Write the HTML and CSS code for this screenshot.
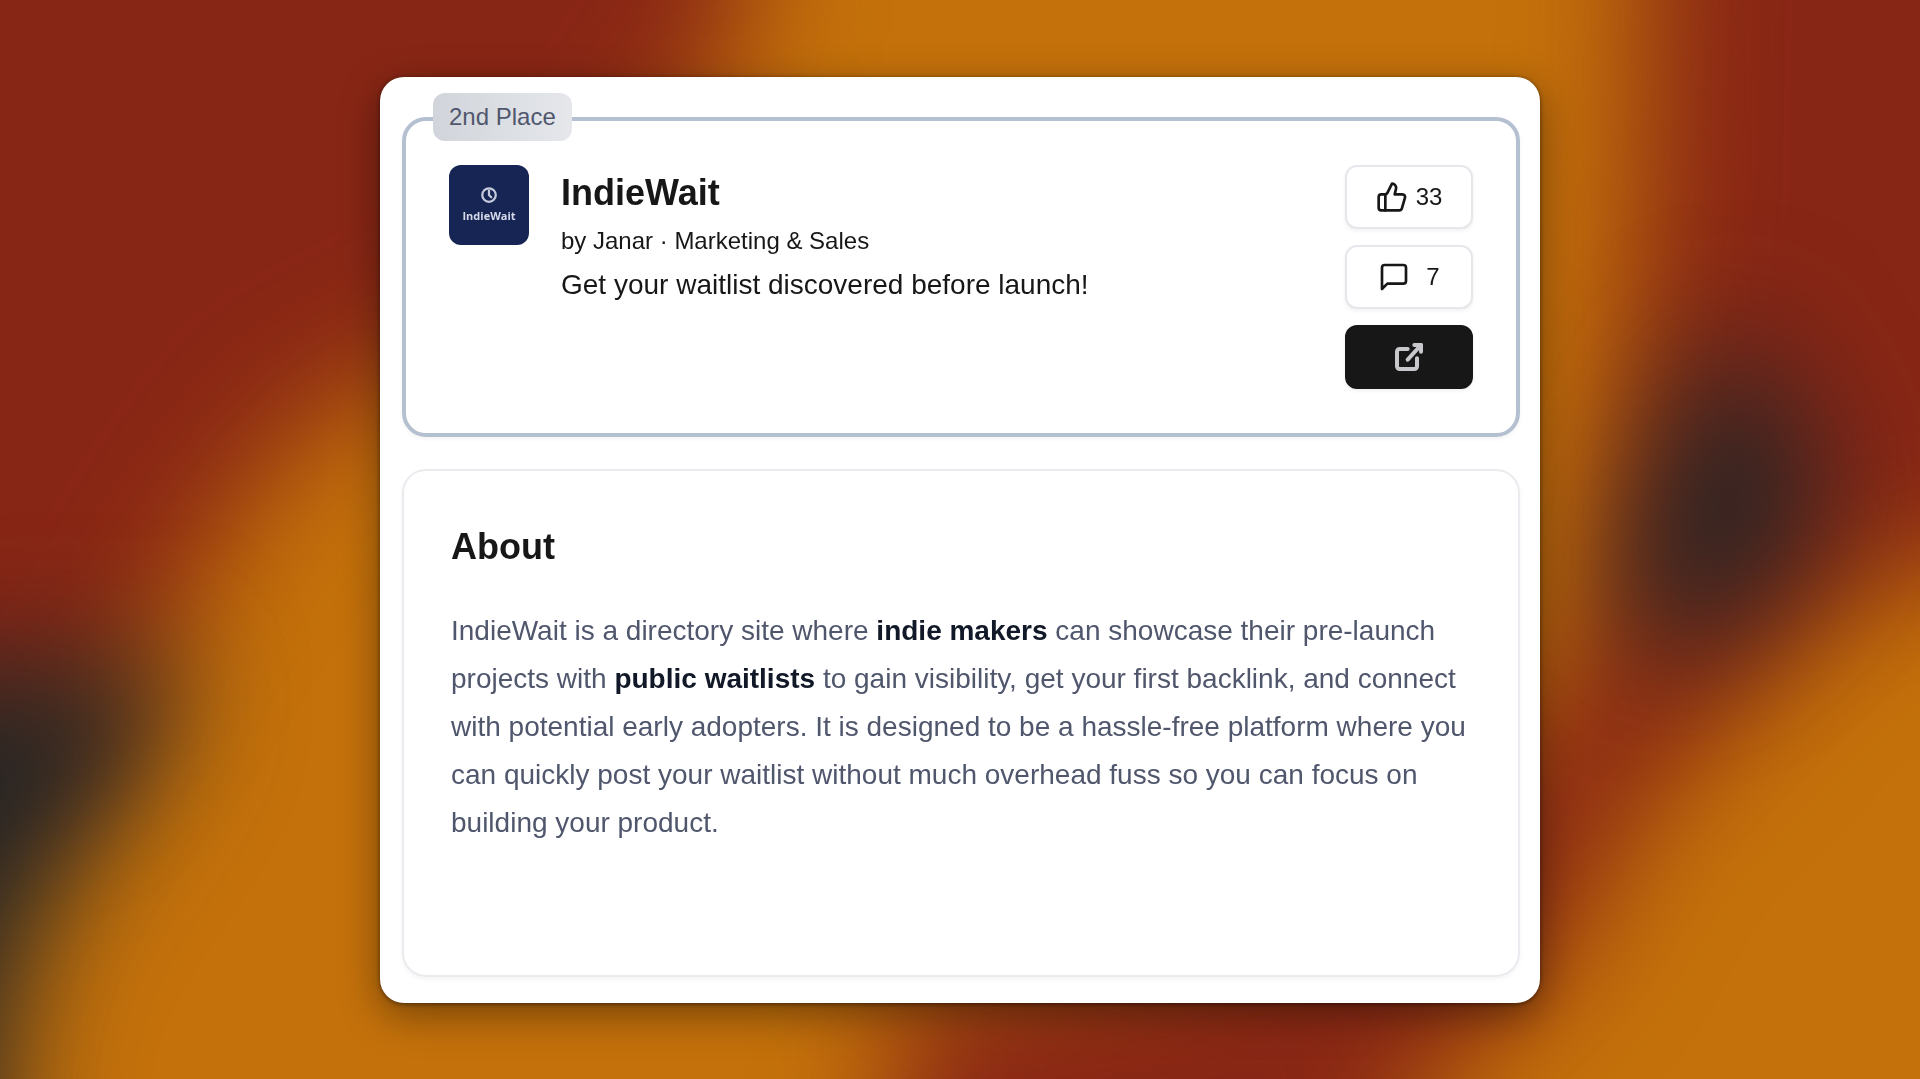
FILE: index.html
```html
<!DOCTYPE html>
<html lang="en">
<head>
    <meta charset="UTF-8">
    <meta name="viewport" content="width=device-width, initial-scale=1.0">
    <title>IndieWait</title>
    <link rel="stylesheet" href="styles.css">
</head>
<body>
    <svg class="backdrop" viewBox="0 0 1920 1079" preserveAspectRatio="none" aria-hidden="true">
        <defs>
            <filter id="soft" x="-50%" y="-50%" width="200%" height="200%" color-interpolation-filters="sRGB">
                <feGaussianBlur stdDeviation="62"/>
            </filter>
        </defs>
        <rect width="1920" height="1079" fill="#c4710b"/>
        <g filter="url(#soft)">
            <path fill="#882615" d="M-300 -300H745V30L620 220L420 370L310 420L230 520L130 680L60 780H-300Z"/>
            <path fill="#882615" d="M1650 -300H2220V560H1920L1800 640L1720 730L1640 810L1560 960L1420 1090L1300 1400H894V1000L1400 900L1510 740L1600 630L1620 420L1640 200Z"/>
        </g>
        <g filter="url(#soft)">
            <path fill="#262525" d="M-300 660L80 665L170 650L175 710L120 800L50 900L10 1000L0 1100V1300H-300Z"/>
            <path fill="#262525" d="M1735 320L1790 410L1830 490L1790 570L1700 650L1630 640L1625 560L1670 420Z"/>
        </g>
    </svg>

    <main class="panel">
        <section class="card product">
            <span class="badge">2nd Place</span>
            <div class="logo">
                <svg width="18" height="18" viewBox="0 0 24 24" aria-hidden="true">
                    <circle cx="12" cy="12" r="9"/>
                    <path d="M12 6v6l3 3"/>
                </svg>
                <span>IndieWait</span>
            </div>
            <div class="info">
                <h1>IndieWait</h1>
                <p class="meta">by Janar · Marketing &amp; Sales</p>
                <p class="tagline">Get your waitlist discovered before launch!</p>
            </div>
            <div class="actions">
                <button type="button" class="btn" aria-label="Upvote">
                    <svg class="icon" viewBox="0 0 24 24" aria-hidden="true">
                        <path d="M7 10v12"/>
                        <path d="M15 5.88 14 10h5.83a2 2 0 0 1 1.92 2.56l-2.33 8A2 2 0 0 1 17.5 22H4a2 2 0 0 1-2-2v-8a2 2 0 0 1 2-2h2.76a2 2 0 0 0 1.79-1.11L12 2a3.13 3.13 0 0 1 3 3.88Z"/>
                    </svg>
                    <span>33</span>
                </button>
                <button type="button" class="btn btn-comments" aria-label="Comments">
                    <svg class="icon" viewBox="0 0 24 24" aria-hidden="true">
                        <path d="M21 15a2 2 0 0 1-2 2H7l-4 4V5a2 2 0 0 1 2-2h14a2 2 0 0 1 2 2z"/>
                    </svg>
                    <span>7</span>
                </button>
                <a href="#visit" class="btn btn-dark" aria-label="Visit website">
                    <svg class="icon" viewBox="0 0 24 24" aria-hidden="true">
                        <path d="M16 3h5v5"/>
                        <path d="M11 14 21 3"/>
                        <path d="M18 13v6a2 2 0 0 1-2 2H5a2 2 0 0 1-2-2V8a2 2 0 0 1 2-2h6"/>
                    </svg>
                </a>
            </div>
        </section>

        <section class="card about">
            <h2>About</h2>
            <p>IndieWait is a directory site where <strong>indie makers</strong> can showcase their pre-launch projects with <strong>public waitlists</strong> to gain visibility, get your first backlink, and connect with potential early adopters. It is designed to be a hassle-free platform where you can quickly post your waitlist without much overhead fuss so you can focus on building your product.</p>
        </section>
    </main>
</body>
</html>
```
FILE: styles.css
```css
* {
    box-sizing: border-box;
}
body {
    font-family: "Liberation Sans", Arial, sans-serif;
    color: #171717;
    background-color: #c4710b;
    margin: 0;
    min-height: 100vh;
    display: flex;
    align-items: center;
    justify-content: center;
}
.backdrop {
    position: fixed;
    inset: 0;
    width: 100%;
    height: 100%;
    z-index: -1;
}
h1, h2, p {
    margin: 0;
}
.panel {
    width: 92%;
    max-width: 1160px;
    background-color: #fff;
    border-radius: 24px;
    padding: 40px 20px 26px 22px;
    box-shadow: 0 1px 5px rgba(0,0,0,0.5), 0 12px 40px rgba(0,0,0,0.4);
}
.card {
    border-radius: 24px;
    box-shadow: 0 2px 4px rgba(0,0,0,0.05);
}
.product {
    position: relative;
    display: flex;
    align-items: flex-start;
    gap: 32px;
    padding: 44px 43px;
    border: 4px solid #b4c0d0;
    margin-bottom: 32px;
}
.badge {
    position: absolute;
    top: -28px;
    left: 27px;
    padding: 0 16px;
    line-height: 48px;
    font-size: 24px;
    color: #50576d;
    background: linear-gradient(to right, #d1d5db, #e5e7eb);
    border-radius: 12px;
}
.logo {
    display: flex;
    flex-direction: column;
    align-items: center;
    justify-content: center;
    gap: 4px;
    width: 80px;
    height: 80px;
    flex-shrink: 0;
    border-radius: 12px;
    background-color: #172554;
    color: #d5daea;
    font-family: "Open Sans", sans-serif;
    font-size: 11px;
    font-weight: bold;
    line-height: 16px;
}
.logo svg {
    fill: none;
    stroke: #c5cbdb;
    stroke-width: 3;
    stroke-linecap: round;
}
.info {
    flex: 1;
}
h1, h2 {
    font-size: 36px;
    line-height: 56px;
}
.meta {
    font-size: 24px;
    line-height: 40px;
}
.tagline {
    font-size: 28px;
    line-height: 48px;
}
.actions {
    display: flex;
    flex-direction: column;
    gap: 16px;
    width: 128px;
}
.btn {
    display: flex;
    align-items: center;
    justify-content: center;
    gap: 8px;
    height: 64px;
    padding: 0;
    font-family: inherit;
    font-size: 24px;
    color: #171717;
    background-color: #fff;
    border: 2px solid #e5e7eb;
    border-radius: 12px;
    box-shadow: 0 2px 4px rgba(0,0,0,0.06);
    cursor: pointer;
}
.btn-comments {
    gap: 16px;
}
.btn-dark {
    color: #c8c8cc;
    background-color: #171717;
    border-color: #171717;
}
.icon {
    width: 32px;
    height: 32px;
    fill: none;
    stroke: currentColor;
    stroke-width: 2;
    stroke-linecap: round;
    stroke-linejoin: round;
}
.btn-dark .icon {
    stroke-width: 3;
}
.about {
    padding: 48px 47px 128px;
    border: 2px solid #e9ebee;
}
.about h2 {
    margin-bottom: 32px;
}
.about p {
    font-size: 28px;
    line-height: 48px;
    color: #50576d;
}
.about strong {
    color: #111827;
}
```
